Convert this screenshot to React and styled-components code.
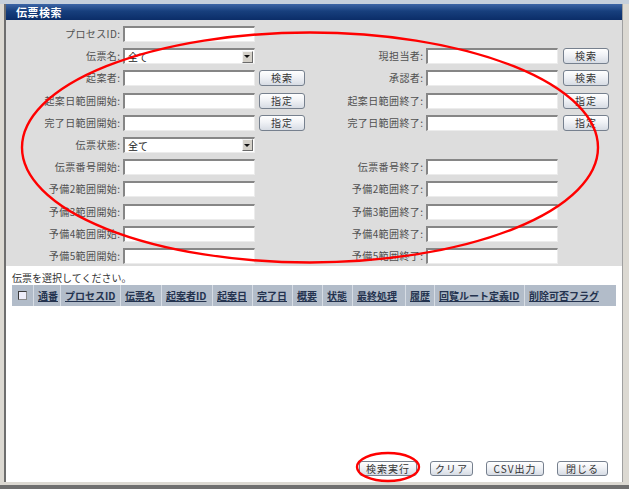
import React from 'react'
import styled, { createGlobalStyle } from 'styled-components'

const GlobalStyle = createGlobalStyle`
  html, body {
    margin: 0;
    padding: 0;
    background: #dcd9d2;
  }
  body {
    font-family: "Noto Sans CJK JP", "Liberation Sans", sans-serif;
    font-size: 10px;
    color: #444;
  }
`

const Window = styled.div`
  position: relative;
  width: 629px;
  height: 489px;
  box-sizing: border-box;
  background: #dcd9d2;
  border-top: 4px solid #c6d0dc;
  border-bottom: 4px solid #6f6f6f;
  padding: 0 6px 3px 4px;
`

const Panel = styled.div`
  height: 100%;
  display: flex;
  flex-direction: column;
  border-left: 2px solid #6e6e6e;
  border-right: 1px solid #a0a0a0;
`

const TitleBar = styled.div`
  height: 16px;
  flex: none;
  display: flex;
  align-items: center;
  padding-left: 10px;
  background: linear-gradient(#3c65a6, #173f7d 45%, #0b2d68);
  color: #fff;
  font-weight: bold;
  font-size: 11px;
  letter-spacing: 0.5px;
`

const Form = styled.div`
  height: 246px;
  flex: none;
  box-sizing: border-box;
  padding-top: 6px;
  display: flex;
  flex-direction: column;
  gap: 6.2px;
  background: #dddddd;
`

const Row = styled.div`
  display: flex;
  height: 16px;
`

const Half = styled.div`
  display: flex;
  align-items: center;
  width: ${p => (p.$right ? 317 : 299)}px;
`

const Label = styled.label`
  width: ${p => p.$w}px;
  flex: none;
  text-align: right;
  margin-right: 2.6px;
  letter-spacing: 0.4px;
  color: #505050;
  white-space: nowrap;
  line-height: 16px;
`

const TextBox = styled.div`
  width: 132px;
  height: 16px;
  flex: none;
  box-sizing: border-box;
  background: #fff;
  border-style: solid;
  border-width: 2px 1px 1px 2px;
  border-color: #868686 #ececec #ececec #868686;
`

const Select = styled(TextBox)`
  display: flex;
  align-items: center;
  justify-content: space-between;
  padding-left: 3px;
  color: #222;
`

const Arrow = styled.div`
  width: 11px;
  height: 12px;
  box-sizing: border-box;
  background: #d4d0c8;
  border-style: solid;
  border-width: 1px;
  border-color: #f4f4f4 #6a6a6a #6a6a6a #f4f4f4;
  display: flex;
  align-items: center;
  justify-content: center;
  margin-right: 1px;
  &::after {
    content: '';
    border-left: 3px solid transparent;
    border-right: 3px solid transparent;
    border-top: 3px solid #111;
  }
`

const Button = styled.button`
  width: ${p => p.$w}px;
  height: ${p => p.$h || 16}px;
  flex: none;
  margin-left: ${p => p.$ml || 0}px;
  padding: 0;
  box-sizing: border-box;
  border: 1px solid #76808e;
  border-radius: 3px;
  background: linear-gradient(#ffffff, #f0f2f6 45%, #d7dce4);
  font-family: inherit;
  font-size: 10px;
  color: #333;
  letter-spacing: 1px;
  line-height: 1;
`

const Results = styled.div`
  flex: 1;
  display: flex;
  flex-direction: column;
  background: #fff;
  padding: 0 6px;
`

const Message = styled.div`
  margin-top: 5px;
  line-height: 14px;
  color: #333;
`

const HeaderRow = styled.div`
  display: flex;
  height: 21px;
  background: #b2bcc9;
`

const HeadCell = styled.div`
  width: ${p => p.$w}px;
  flex: none;
  box-sizing: border-box;
  display: flex;
  align-items: center;
  justify-content: ${p => (p.$center ? 'center' : 'flex-start')};
  padding-left: ${p => (p.$center ? 0 : 4)}px;
  border-left: ${p => (p.$first ? 'none' : '1px solid #d6dce4')};
  font-weight: bold;
  color: #24334f;
  text-decoration: underline;
  white-space: nowrap;
`

const Check = styled.span`
  width: 9px;
  height: 9px;
  box-sizing: border-box;
  border: 1px solid #3a3a3a;
  border-right-color: #8a8a8a;
  border-bottom-color: #8a8a8a;
  background: #eeeefa;
`

const Footer = styled.div`
  margin-top: auto;
  display: flex;
  justify-content: flex-end;
  gap: 13px;
  padding: 0 8px 6px 0;
`

const Marks = styled.svg`
  position: absolute;
  top: -4px;
  left: 0;
  pointer-events: none;
`

const rows = [
  [{ label: 'プロセスID:', type: 'text' }, null],
  [{ label: '伝票名:', type: 'select' }, { label: '現担当者:', type: 'text', btn: '検索' }],
  [{ label: '起案者:', type: 'text', btn: '検索' }, { label: '承認者:', type: 'text', btn: '検索' }],
  [{ label: '起案日範囲開始:', type: 'text', btn: '指定' }, { label: '起案日範囲終了:', type: 'text', btn: '指定' }],
  [{ label: '完了日範囲開始:', type: 'text', btn: '指定' }, { label: '完了日範囲終了:', type: 'text', btn: '指定' }],
  [{ label: '伝票状態:', type: 'select' }, null],
  [{ label: '伝票番号開始:', type: 'text' }, { label: '伝票番号終了:', type: 'text' }],
  [{ label: '予備2範囲開始:', type: 'text' }, { label: '予備2範囲終了:', type: 'text' }],
  [{ label: '予備3範囲開始:', type: 'text' }, { label: '予備3範囲終了:', type: 'text' }],
  [{ label: '予備4範囲開始:', type: 'text' }, { label: '予備4範囲終了:', type: 'text' }],
  [{ label: '予備5範囲開始:', type: 'text' }, { label: '予備5範囲終了:', type: 'text' }],
]

const columns = [
  ['通番', 27], ['プロセスID', 60], ['伝票名', 41], ['起案者ID', 51], ['起案日', 40],
  ['完了日', 40], ['概要', 30], ['状態', 30], ['最終処理', 53], ['履歴', 29],
  ['回覧ルート定義ID', 90], ['削除可否フラグ', 81],
]

const Field = ({ field, right }) => (
  <Half $right={right}>
    {field && (
      <>
        <Label $w={right ? 118.4 : 114.4}>{field.label}</Label>
        {field.type === 'select' ? (
          <Select>全て<Arrow /></Select>
        ) : (
          <TextBox />
        )}
        {field.btn && <Button $w={46} $ml={right ? 5 : 4}>{field.btn}</Button>}
      </>
    )}
  </Half>
)

const App = () => {
  return (
    <Window>
      <GlobalStyle />
      <Panel>
        <TitleBar>伝票検索</TitleBar>
        <Form>
          {rows.map((r, i) => (
            <Row key={i}>
              <Field field={r[0]} />
              <Field field={r[1]} right />
            </Row>
          ))}
        </Form>
        <Results>
          <Message>伝票を選択してください。</Message>
          <HeaderRow>
            <HeadCell $w={21} $first $center><Check /></HeadCell>
            {columns.map(([name, w]) => (
              <HeadCell key={name} $w={w}>{name}</HeadCell>
            ))}
          </HeaderRow>
          <Footer>
            <Button $w={58} $h={15}>検索実行</Button>
            <Button $w={43} $h={15}>クリア</Button>
            <Button $w={58} $h={15}>CSV出力</Button>
            <Button $w={51} $h={15}>閉じる</Button>
          </Footer>
        </Results>
      </Panel>
      <Marks width="629" height="489" viewBox="0 0 629 489">
        <ellipse cx="310" cy="147.5" rx="288" ry="115" fill="none" stroke="#ff0000" strokeWidth="2.4" />
        <ellipse cx="388" cy="467" rx="31" ry="14" fill="none" stroke="#ff0000" strokeWidth="2.4" />
      </Marks>
    </Window>
  )
}

export default App
